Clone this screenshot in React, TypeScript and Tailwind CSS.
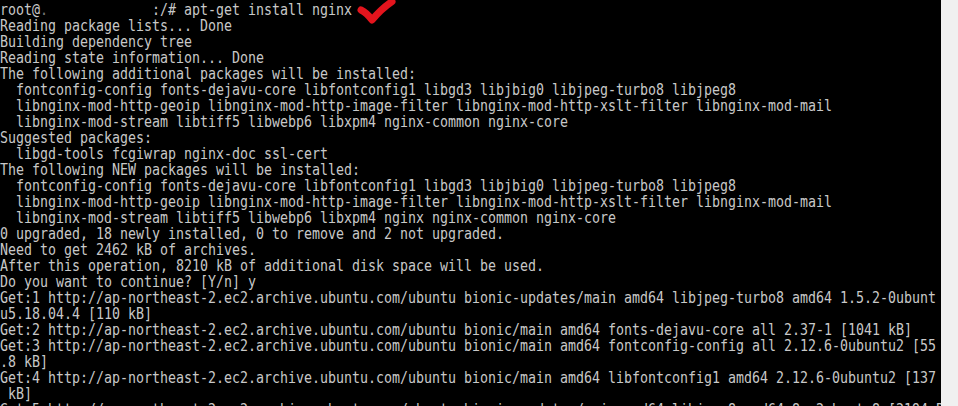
import React from "react";

const lines: string[] = [
  "Reading package lists... Done",
  "Building dependency tree",
  "Reading state information... Done",
  "The following additional packages will be installed:",
  "  fontconfig-config fonts-dejavu-core libfontconfig1 libgd3 libjbig0 libjpeg-turbo8 libjpeg8",
  "  libnginx-mod-http-geoip libnginx-mod-http-image-filter libnginx-mod-http-xslt-filter libnginx-mod-mail",
  "  libnginx-mod-stream libtiff5 libwebp6 libxpm4 nginx-common nginx-core",
  "Suggested packages:",
  "  libgd-tools fcgiwrap nginx-doc ssl-cert",
  "The following NEW packages will be installed:",
  "  fontconfig-config fonts-dejavu-core libfontconfig1 libgd3 libjbig0 libjpeg-turbo8 libjpeg8",
  "  libnginx-mod-http-geoip libnginx-mod-http-image-filter libnginx-mod-http-xslt-filter libnginx-mod-mail",
  "  libnginx-mod-stream libtiff5 libwebp6 libxpm4 nginx nginx-common nginx-core",
  "0 upgraded, 18 newly installed, 0 to remove and 2 not upgraded.",
  "Need to get 2462 kB of archives.",
  "After this operation, 8210 kB of additional disk space will be used.",
  "Do you want to continue? [Y/n] y",
  "Get:1 http://ap-northeast-2.ec2.archive.ubuntu.com/ubuntu bionic-updates/main amd64 libjpeg-turbo8 amd64 1.5.2-0ubunt",
  "u5.18.04.4 [110 kB]",
  "Get:2 http://ap-northeast-2.ec2.archive.ubuntu.com/ubuntu bionic/main amd64 fonts-dejavu-core all 2.37-1 [1041 kB]",
  "Get:3 http://ap-northeast-2.ec2.archive.ubuntu.com/ubuntu bionic/main amd64 fontconfig-config all 2.12.6-0ubuntu2 [55",
  ".8 kB]",
  "Get:4 http://ap-northeast-2.ec2.archive.ubuntu.com/ubuntu bionic/main amd64 libfontconfig1 amd64 2.12.6-0ubuntu2 [137",
  " kB]",
  "Get:5 http://ap-northeast-2.ec2.archive.ubuntu.com/ubuntu bionic-updates/main amd64 libjpeg8 amd64 8c-2ubuntu8 [2194 B]",
];

// red hand-drawn tick next to the command
const CheckMark = () => (
  <svg
    className="absolute left-[354px] top-0"
    width="42"
    height="25"
    viewBox="0 0 42 25"
  >
    <path
      d="M7 10 Q13 13 18 20 Q27 9 38 1.5"
      fill="none"
      stroke="#e3141d"
      strokeWidth="7"
      strokeLinecap="round"
      strokeLinejoin="round"
    />
  </svg>
);

export default function App() {
  return (
    <div className="flex w-[958px] h-[406px] overflow-hidden bg-[#f0f0f0]">
      <div className="relative w-[941px] h-full bg-black overflow-hidden">
        <div className="origin-top-left scale-x-[0.8305] pt-[2px] w-max font-['DejaVu_Sans_Mono',monospace] text-[16px] leading-4 text-[#c8c8c8] whitespace-pre">
          <div className="h-4">
            {"root@"}
            <span className="text-[#777]">.</span>
            {"             :/# apt-get install nginx"}
          </div>
          {lines.map((line, i) => (
            <div key={i} className="h-4">
              {line}
            </div>
          ))}
        </div>
        <CheckMark />
      </div>
      <div className="flex-1" />
    </div>
  );
}
